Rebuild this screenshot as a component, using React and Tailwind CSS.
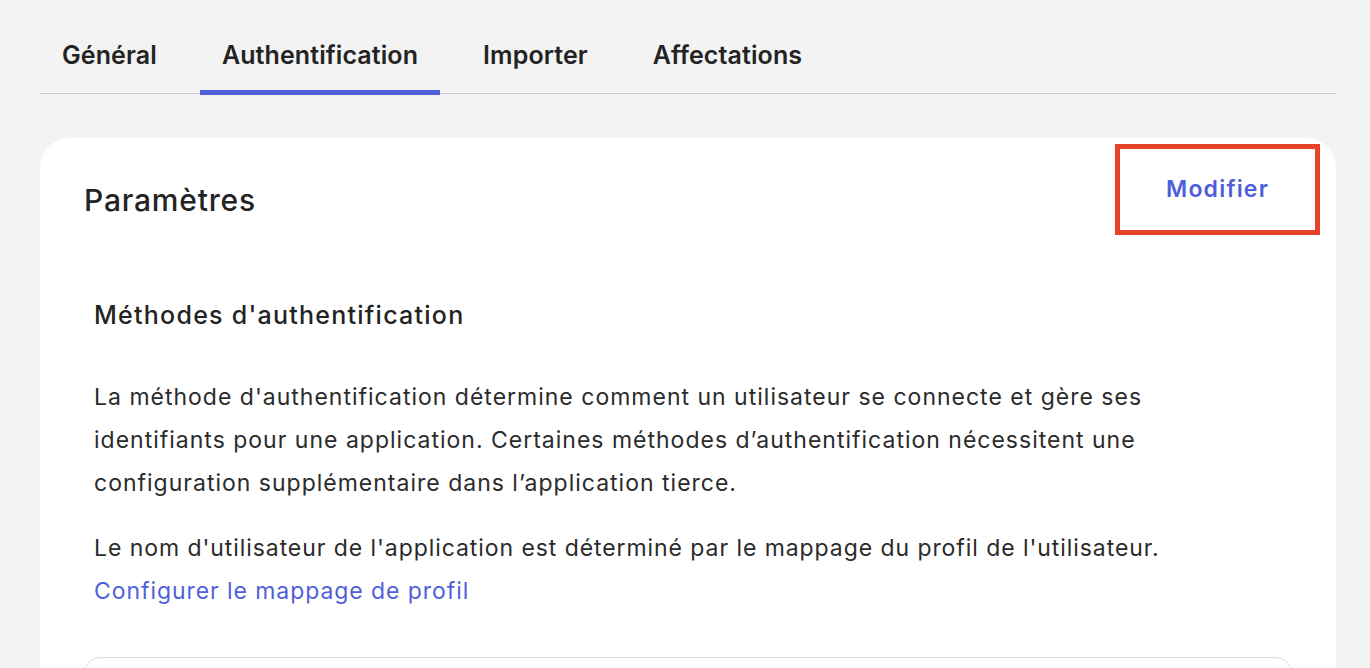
export default function App() {
  const tabs = ["Général", "Authentification", "Importer", "Affectations"];
  const active = 1;

  return (
    <div className="min-h-screen bg-[#f3f3f3] pl-10 pr-[34px] font-['Inter',sans-serif] text-[#232323] overflow-hidden h-[668px]">
      {/* tabs */}
      <div className="flex gap-[21px] border-b border-[#cccccc] h-[94px]">
        {tabs.map((t, i) => (
          <div key={t} className="relative px-[22px] pt-[39px]">
            <span className="text-[25px] leading-[32px] font-semibold tracking-[0.1px]">{t}</span>
            {i === active && (
              <span className="absolute left-0 right-0 bottom-[-2px] h-[5px] bg-[#4f5fdb]" />
            )}
          </div>
        ))}
      </div>

      {/* card */}
      <div className="mt-[44px] bg-white rounded-[30px] pb-10">
        <div className="flex justify-between items-start">
          <h2 className="pl-[44px] pt-[44px] text-[30px] leading-[36px] font-medium tracking-[0.8px]">
            Paramètres
          </h2>
          <button className="mt-[6px] mr-4 w-[205px] h-[91px] border-[5px] border-[#e8412a] text-[#4f5fdb] text-[23px] font-semibold tracking-[1.2px]">
            Modifier
          </button>
        </div>

        <div className="pl-[54px] pr-[96px] mt-[65px]">
          <h3 className="text-[25px] leading-[30px] font-medium tracking-[1.25px]">
            Méthodes d'authentification
          </h3>
          <p className="mt-[46px] text-[23px] leading-[43px] tracking-[1px] text-[#2b2b2b]">
            La méthode d'authentification détermine comment un utilisateur se connecte et gère ses identifiants pour une application. Certaines méthodes d’authentification nécessitent une configuration supplémentaire dans l’application tierce.
          </p>
          <p className="mt-[22px] text-[23px] leading-[43px] tracking-[0.93px] text-[#2b2b2b]">
            Le nom d'utilisateur de l'application est déterminé par le mappage du profil de l'utilisateur.
            <br />
            <a href="#" className="text-[#4f5fdb]">Configurer le mappage de profil</a>
          </p>
        </div>

        <div className="mt-[44px] mx-[44px] h-[120px] rounded-[16px] border border-[#dddddd]" />
      </div>
    </div>
  );
}
